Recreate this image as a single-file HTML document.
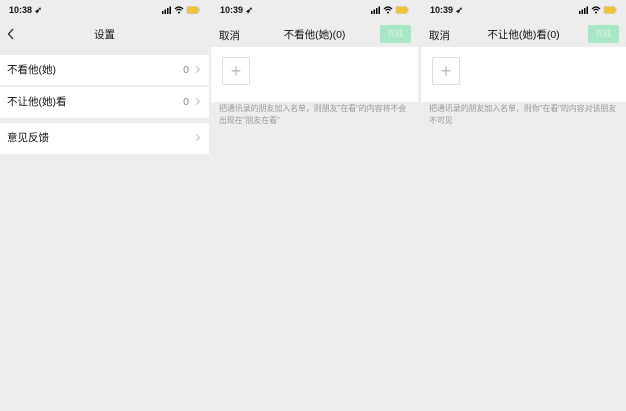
<!DOCTYPE html>
<html><head><meta charset="utf-8"><style>
*{margin:0;padding:0;box-sizing:border-box}
body{width:626px;height:411px;background:#ededed;font-family:"Liberation Sans","Noto Sans CJK SC",sans-serif;position:relative;overflow:hidden;color:#111}
.p{position:absolute;top:0;height:411px;background:#ededed}
.sb{position:absolute;top:5px;font-size:9px;font-weight:bold;left:9px}
.ic{position:absolute;top:6px;right:9px;width:38px;height:8px}
.bar{position:absolute;top:27px;width:100%;text-align:center;font-size:10.5px}
.l{position:absolute;left:8px;top:28px;font-size:10.5px}
.done{position:absolute;right:7px;top:25px;width:31px;height:18px;background:#a9e6c6;border-radius:2px;color:#d7f5e5;font-size:8px;text-align:center;line-height:18px}
.row{position:absolute;left:0;width:100%;height:31px;background:#fff;font-size:10.5px;line-height:31px;padding-left:7px}
.row .r{position:absolute;right:10px;top:0;color:#888}
.chev{display:inline-block;width:5px;height:5px;border-top:1px solid #bbb;border-right:1px solid #bbb;transform:rotate(45deg);margin-left:5px;margin-bottom:1px}
.wa{position:absolute;left:0;top:47px;width:100%;height:55px;background:#fff}
.add{position:absolute;left:11px;top:10px;width:28px;height:28px;border:1px solid #ddd;border-radius:2px;color:#bbb;font-size:18px;text-align:center;line-height:26px;font-weight:100}
.tip{position:absolute;left:8px;top:103px;width:194px;font-size:8px;line-height:11.5px;color:#999;letter-spacing:-0.1px}
</style></head><body>
<div class="p" style="left:0;width:209px">
<div class="sb">10:38 ➶</div>
<svg class="ic" viewBox="0 0 38 8"><rect x="0" y="5" width="1.5" height="3" fill="#000"/><rect x="2.5" y="3.5" width="1.5" height="4.5" fill="#000"/><rect x="5" y="2" width="1.5" height="6" fill="#000"/><rect x="7.5" y="0.5" width="1.5" height="7.5" fill="#000"/><path d="M13 3 Q17 -1 21 3 M14.5 4.5 Q17 2 19.5 4.5" stroke="#000" fill="none" stroke-width="1.2"/><circle cx="17" cy="6.5" r="1" fill="#000"/><rect x="25" y="0.5" width="11" height="7" rx="1.5" fill="#f2c530" stroke="#bbb" stroke-width=".6"/><rect x="36.3" y="2.5" width="1.2" height="3" fill="#bbb"/></svg>
<svg style="position:absolute;left:7px;top:28px" width="8" height="12"><path d="M6 1 L1.5 6 L6 11" stroke="#222" stroke-width="1.3" fill="none"/></svg>
<div class="bar">设置</div>
<div class="row" style="top:55px;border-bottom:1px solid #eee">不看他(她)<span class="r">0<span class="chev"></span></span></div>
<div class="row" style="top:87px">不让他(她)看<span class="r">0<span class="chev"></span></span></div>
<div class="row" style="top:123px">意见反馈<span class="r"><span class="chev"></span></span></div>
</div>
<div class="p" style="left:211px;width:207px">
<div class="sb">10:39 ➶</div>
<svg class="ic" viewBox="0 0 38 8"><rect x="0" y="5" width="1.5" height="3" fill="#000"/><rect x="2.5" y="3.5" width="1.5" height="4.5" fill="#000"/><rect x="5" y="2" width="1.5" height="6" fill="#000"/><rect x="7.5" y="0.5" width="1.5" height="7.5" fill="#000"/><path d="M13 3 Q17 -1 21 3 M14.5 4.5 Q17 2 19.5 4.5" stroke="#000" fill="none" stroke-width="1.2"/><circle cx="17" cy="6.5" r="1" fill="#000"/><rect x="25" y="0.5" width="11" height="7" rx="1.5" fill="#f2c530" stroke="#bbb" stroke-width=".6"/><rect x="36.3" y="2.5" width="1.2" height="3" fill="#bbb"/></svg>
<div class="l">取消</div><div class="bar">不看他(她)(0)</div><div class="done">完成</div>
<div class="wa"><div class="add">+</div></div>
<div class="tip">把通讯录的朋友加入名单，则朋友"在看"的内容将不会出现在"朋友在看"</div>
</div>
<div class="p" style="left:421px;width:205px">
<div class="sb">10:39 ➶</div>
<svg class="ic" viewBox="0 0 38 8"><rect x="0" y="5" width="1.5" height="3" fill="#000"/><rect x="2.5" y="3.5" width="1.5" height="4.5" fill="#000"/><rect x="5" y="2" width="1.5" height="6" fill="#000"/><rect x="7.5" y="0.5" width="1.5" height="7.5" fill="#000"/><path d="M13 3 Q17 -1 21 3 M14.5 4.5 Q17 2 19.5 4.5" stroke="#000" fill="none" stroke-width="1.2"/><circle cx="17" cy="6.5" r="1" fill="#000"/><rect x="25" y="0.5" width="11" height="7" rx="1.5" fill="#f2c530" stroke="#bbb" stroke-width=".6"/><rect x="36.3" y="2.5" width="1.2" height="3" fill="#bbb"/></svg>
<div class="l">取消</div><div class="bar">不让他(她)看(0)</div><div class="done">完成</div>
<div class="wa"><div class="add">+</div></div>
<div class="tip">把通讯录的朋友加入名单，则你"在看"的内容对该朋友不可见</div>
</div>
</body></html>
